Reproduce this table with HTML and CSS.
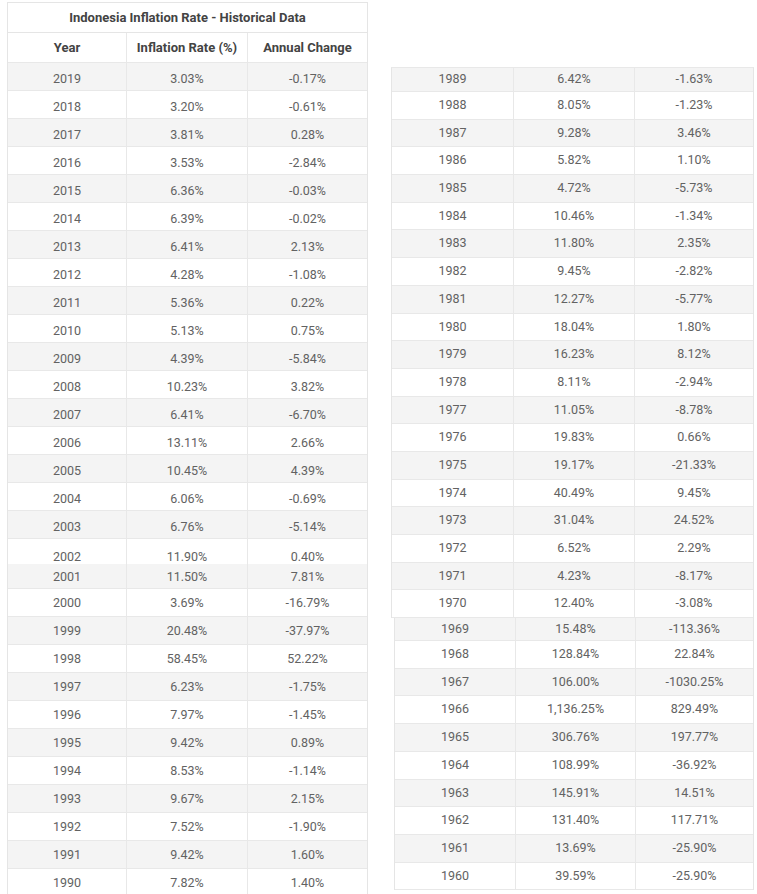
FILE: index.html
```html
<!DOCTYPE html>
<html>
<head>
<meta charset="utf-8">
<title>Indonesia Inflation Rate - Historical Data</title>
<link rel="stylesheet" href="styles.css">
</head>
<body>
<div class="page">
  <div class="left">
    <div class="tbl tbl-l1">
      <div class="title">Indonesia Inflation Rate - Historical Data</div>
      <div class="row head cols-l"><span>Year</span><span>Inflation Rate (%)</span><span>Annual Change</span></div>
      <div class="row low cols-l g"><span>2019</span><span>3.03%</span><span>-0.17%</span></div>
      <div class="row low cols-l"><span>2018</span><span>3.20%</span><span>-0.61%</span></div>
      <div class="row low cols-l g"><span>2017</span><span>3.81%</span><span>0.28%</span></div>
      <div class="row low cols-l"><span>2016</span><span>3.53%</span><span>-2.84%</span></div>
      <div class="row low cols-l g"><span>2015</span><span>6.36%</span><span>-0.03%</span></div>
      <div class="row low cols-l"><span>2014</span><span>6.39%</span><span>-0.02%</span></div>
      <div class="row low cols-l g"><span>2013</span><span>6.41%</span><span>2.13%</span></div>
      <div class="row low cols-l"><span>2012</span><span>4.28%</span><span>-1.08%</span></div>
      <div class="row low cols-l g"><span>2011</span><span>5.36%</span><span>0.22%</span></div>
      <div class="row low cols-l"><span>2010</span><span>5.13%</span><span>0.75%</span></div>
      <div class="row low cols-l g"><span>2009</span><span>4.39%</span><span>-5.84%</span></div>
      <div class="row low cols-l"><span>2008</span><span>10.23%</span><span>3.82%</span></div>
      <div class="row low cols-l g"><span>2007</span><span>6.41%</span><span>-6.70%</span></div>
      <div class="row low cols-l"><span>2006</span><span>13.11%</span><span>2.66%</span></div>
      <div class="row low cols-l g"><span>2005</span><span>10.45%</span><span>4.39%</span></div>
      <div class="row low cols-l"><span>2004</span><span>6.06%</span><span>-0.69%</span></div>
      <div class="row low cols-l g"><span>2003</span><span>6.76%</span><span>-5.14%</span></div>
      <div class="row low cols-l cut-l1"><span>2002</span><span>11.90%</span><span>0.40%</span></div>
    </div>
    <div class="tbl tbl-l2">
      <div class="row cols-l g cut-l2"><span>2001</span><span>11.50%</span><span>7.81%</span></div>
      <div class="row cols-l"><span>2000</span><span>3.69%</span><span>-16.79%</span></div>
      <div class="row cols-l g"><span>1999</span><span>20.48%</span><span>-37.97%</span></div>
      <div class="row cols-l"><span>1998</span><span>58.45%</span><span>52.22%</span></div>
      <div class="row cols-l g"><span>1997</span><span>6.23%</span><span>-1.75%</span></div>
      <div class="row cols-l"><span>1996</span><span>7.97%</span><span>-1.45%</span></div>
      <div class="row cols-l g"><span>1995</span><span>9.42%</span><span>0.89%</span></div>
      <div class="row cols-l"><span>1994</span><span>8.53%</span><span>-1.14%</span></div>
      <div class="row cols-l g"><span>1993</span><span>9.67%</span><span>2.15%</span></div>
      <div class="row cols-l"><span>1992</span><span>7.52%</span><span>-1.90%</span></div>
      <div class="row cols-l g"><span>1991</span><span>9.42%</span><span>1.60%</span></div>
      <div class="row cols-l last"><span>1990</span><span>7.82%</span><span>1.40%</span></div>
    </div>
  </div>
  <div class="right">
    <div class="tbl tbl-r1">
      <div class="row rr cols-r1 g cut-r"><span>1989</span><span>6.42%</span><span>-1.63%</span></div>
      <div class="row rr cols-r1"><span>1988</span><span>8.05%</span><span>-1.23%</span></div>
      <div class="row rr cols-r1 g"><span>1987</span><span>9.28%</span><span>3.46%</span></div>
      <div class="row rr cols-r1"><span>1986</span><span>5.82%</span><span>1.10%</span></div>
      <div class="row rr cols-r1 g"><span>1985</span><span>4.72%</span><span>-5.73%</span></div>
      <div class="row rr cols-r1"><span>1984</span><span>10.46%</span><span>-1.34%</span></div>
      <div class="row rr cols-r1 g"><span>1983</span><span>11.80%</span><span>2.35%</span></div>
      <div class="row rr cols-r1"><span>1982</span><span>9.45%</span><span>-2.82%</span></div>
      <div class="row rr cols-r1 g"><span>1981</span><span>12.27%</span><span>-5.77%</span></div>
      <div class="row rr cols-r1"><span>1980</span><span>18.04%</span><span>1.80%</span></div>
      <div class="row rr cols-r1 g"><span>1979</span><span>16.23%</span><span>8.12%</span></div>
      <div class="row rr cols-r1"><span>1978</span><span>8.11%</span><span>-2.94%</span></div>
      <div class="row rr cols-r1 g"><span>1977</span><span>11.05%</span><span>-8.78%</span></div>
      <div class="row rr cols-r1"><span>1976</span><span>19.83%</span><span>0.66%</span></div>
      <div class="row rr cols-r1 g"><span>1975</span><span>19.17%</span><span>-21.33%</span></div>
      <div class="row rr cols-r1"><span>1974</span><span>40.49%</span><span>9.45%</span></div>
      <div class="row rr cols-r1 g"><span>1973</span><span>31.04%</span><span>24.52%</span></div>
      <div class="row rr cols-r1"><span>1972</span><span>6.52%</span><span>2.29%</span></div>
      <div class="row rr cols-r1 g"><span>1971</span><span>4.23%</span><span>-8.17%</span></div>
      <div class="row rr cols-r1"><span>1970</span><span>12.40%</span><span>-3.08%</span></div>
    </div>
    <div class="tbl tbl-r2">
      <div class="row rr cols-r2 g cut-r2"><span>1969</span><span>15.48%</span><span>-113.36%</span></div>
      <div class="row rr cols-r2"><span>1968</span><span>128.84%</span><span>22.84%</span></div>
      <div class="row rr cols-r2 g"><span>1967</span><span>106.00%</span><span>-1030.25%</span></div>
      <div class="row rr cols-r2"><span>1966</span><span>1,136.25%</span><span>829.49%</span></div>
      <div class="row rr cols-r2 g"><span>1965</span><span>306.76%</span><span>197.77%</span></div>
      <div class="row rr cols-r2"><span>1964</span><span>108.99%</span><span>-36.92%</span></div>
      <div class="row rr cols-r2 g"><span>1963</span><span>145.91%</span><span>14.51%</span></div>
      <div class="row rr cols-r2"><span>1962</span><span>131.40%</span><span>117.71%</span></div>
      <div class="row rr cols-r2 g"><span>1961</span><span>13.69%</span><span>-25.90%</span></div>
      <div class="row rr cols-r2 end"><span>1960</span><span>39.59%</span><span>-25.90%</span></div>
    </div>
  </div>
</div>
</body>
</html>
```

FILE: styles.css
```css
html, body {
  margin: 0;
  padding: 0;
  background: #ffffff;
  overflow: hidden;
}

body {
  font-family: Roboto, "Liberation Sans", Arial, sans-serif;
  font-size: 12.5px;
  color: #626262;
}

.page {
  display: flex;
  align-items: flex-start;
}

.left {
  margin-left: 7px;
  margin-top: 2px;
  width: 361px;
}

.right {
  margin-left: 23px;
  margin-top: 67px;
  width: 363px;
}

.tbl {
  border-left: 1px solid #e5e5e5;
  border-right: 1px solid #e5e5e5;
  box-sizing: border-box;
}

.tbl-r1 {
  border-top: 1px solid #e8e8e8;
}

.tbl-r2 {
  margin-left: 3px;
  width: 360px;
}

.title {
  height: 31px;
  line-height: 29px;
  text-align: center;
  font-size: 13px;
  font-weight: 700;
  color: #434343;
  border-top: 1px solid #e5e5e5;
  border-bottom: 1px solid #e5e5e5;
  box-sizing: border-box;
}

.row {
  display: grid;
  height: 28px;
  line-height: 27px;
  box-sizing: border-box;
  border-bottom: 1px solid #e8e8e8;
  overflow: hidden;
}

.row > span {
  display: block;
  text-align: center;
  border-right: 1px solid #e8e8e8;
  white-space: nowrap;
}

.row > span:last-child {
  border-right: 0;
}

.cols-l {
  grid-template-columns: 119px 121px 1fr;
}

.cols-r1 {
  grid-template-columns: 122px 121px 1fr;
}

.cols-r2 {
  grid-template-columns: 121px 120px 1fr;
}

.head {
  height: 30px;
  line-height: 29px;
  font-size: 13px;
  font-weight: 700;
  color: #434343;
}

.low > span {
  padding-top: 2px;
  line-height: 28px;
}

.g {
  background: #f4f4f4;
}

.cut-l1 {
  height: 25px;
  border-bottom: 0;
}

.cut-l1 > span {
  padding-top: 4px;
}

.cut-l2 {
  height: 25px;
  line-height: 25px;
}

.last {
  height: 25px;
  border-bottom: 0;
}

.rr {
  height: 27.7px;
  line-height: 26.7px;
}

.cut-r {
  height: 24px;
  line-height: 22px;
}

.cut-r2 {
  height: 23px;
  line-height: 22px;
}

.end {
  height: 27.4px;
}
```
